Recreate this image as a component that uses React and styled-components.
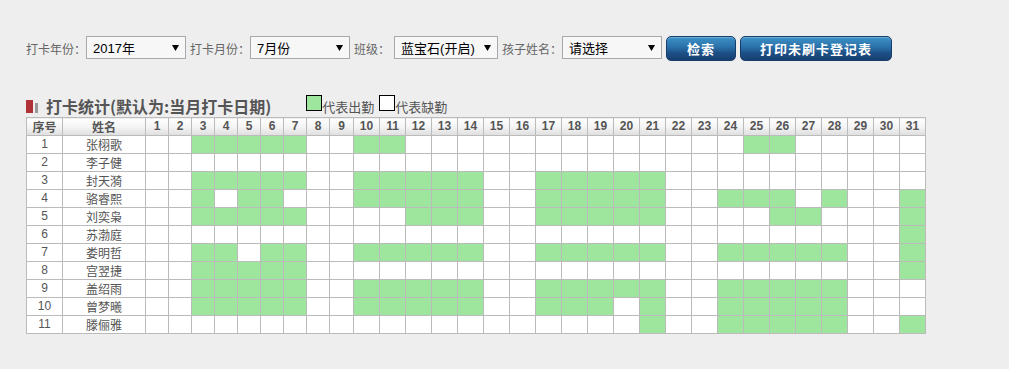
import React from "react";
import styled, { createGlobalStyle } from "styled-components";

const GlobalStyle = createGlobalStyle`
  html, body {
    margin: 0;
    padding: 0;
    background: #eeeeee;
  }
  body {
    font-family: "Liberation Sans", "Noto Sans CJK SC", sans-serif;
    color: #555;
  }
`;

const Page = styled.div`
  padding: 36px 26px 36px 26px;
  width: 957px;
  box-sizing: border-box;
`;

const FilterBar = styled.div`
  display: flex;
  align-items: center;
  gap: 4px;
  height: 25px;
`;

const Field = styled.div`
  display: flex;
  align-items: center;
`;

const Label = styled.span`
  font-family: "Noto Sans CJK SC", sans-serif;
  font-size: 12px;
  color: #666;
  white-space: nowrap;
  margin-right: ${(p) => p.$gap || 0}px;
`;

const SelectBox = styled.div`
  box-sizing: border-box;
  width: ${(p) => p.$width}px;
  height: 23px;
  margin-bottom: 2px;
  border: 1px solid #a9a9a9;
  background: #f7f7f7;
  display: flex;
  align-items: center;
  justify-content: space-between;
  padding: 0 6px 0 6px;
  font-size: 13px;
  color: #000;
`;

const Arrow = () => (
  <svg width="7" height="6" viewBox="0 0 7 6">
    <path d="M0 0 L7 0 L3.5 6 Z" fill="#000" />
  </svg>
);

const Button = styled.button`
  box-sizing: border-box;
  height: 25px;
  width: ${(p) => p.$width}px;
  border: 1px solid #173d6b;
  border-radius: 5px;
  background: linear-gradient(#3d93c8 0%, #2a6fa8 45%, #1c4f86 70%, #173f70 100%);
  box-shadow: inset 0 1px 0 rgba(255, 255, 255, 0.25);
  color: #fff;
  font-family: "Noto Sans CJK SC", sans-serif;
  font-weight: bold;
  font-size: 13px;
  letter-spacing: 1px;
  padding: 0;
  cursor: pointer;
`;

const TitleRow = styled.div`
  display: flex;
  align-items: center;
  margin-top: 34px;
  height: 22px;
`;

const TitleIcon = styled.span`
  display: flex;
  align-items: flex-end;
  gap: 2px;
  margin-right: 8px;
  height: 13px;

  &::before {
    content: "";
    width: 7px;
    height: 13px;
    background: #b03236;
  }
  &::after {
    content: "";
    width: 3px;
    height: 10px;
    background: #999;
  }
`;

const Title = styled.h2`
  margin: 0;
  font-family: "Noto Sans CJK SC", sans-serif;
  font-size: 16px;
  font-weight: bold;
  color: #555;
  line-height: 22px;
`;

const Legend = styled.div`
  display: flex;
  align-items: center;
  margin-left: 35px;
  font-family: "Noto Sans CJK SC", sans-serif;
  font-size: 13px;
  color: #555;
`;

const Swatch = styled.span`
  box-sizing: border-box;
  width: 16px;
  height: 16px;
  border: 1px solid #000;
  background: ${(p) => (p.$on ? "#9ee69e" : "#fff")};
  margin-top: -6px;
`;

const LegendText = styled.span`
  margin-right: 5px;
`;

const Table = styled.table`
  border-collapse: collapse;
  table-layout: fixed;
  width: 900px;
  margin-top: 0;
  background: #fff;
`;

const HeadCell = styled.th`
  height: 17px;
  padding: 0;
  border: 1px solid #bbb;
  background: linear-gradient(#ffffff 0%, #f4f4f4 50%, #dedede 100%);
  font-size: 12px;
  font-weight: bold;
  color: #555;
  text-align: center;
  line-height: 17px;
  font-family: ${(p) => (p.$cjk ? `"Noto Sans CJK SC", sans-serif` : `"Liberation Sans", sans-serif`)};
`;

const Cell = styled.td`
  height: 17px;
  padding: 0;
  border: 1px solid #bbb;
  background: ${(p) => (p.$on ? "#9ee69e" : "#fff")};
  font-size: 12px;
  color: #555;
  text-align: center;
  line-height: 17px;
  font-family: ${(p) => (p.$cjk ? `"Noto Sans CJK SC", sans-serif` : `"Liberation Sans", sans-serif`)};
`;

const days = Array.from({ length: 31 }, (_, i) => i + 1);

const colWidth = (d) => (d <= 8 ? 23 : d === 9 ? 24 : 26);

const range = (a, b) => Array.from({ length: b - a + 1 }, (_, i) => a + i);

const students = [
  { name: "张栩歌", on: [...range(3, 7), 10, 11, 25, 26] },
  { name: "李子健", on: [] },
  { name: "封天漪", on: [...range(3, 7), ...range(10, 14), ...range(17, 21)] },
  { name: "骆睿熙", on: [3, 5, 6, ...range(10, 14), ...range(17, 21), 24, 25, 26, 28, 31] },
  { name: "刘奕枭", on: [...range(3, 7), 12, 13, 14, ...range(17, 21), 26, 27, 31] },
  { name: "苏渤庭", on: [31] },
  { name: "娄明哲", on: [3, 4, 6, 7, ...range(10, 14), ...range(17, 21), ...range(24, 28), 31] },
  { name: "宫翌捷", on: [...range(3, 7), 31] },
  { name: "盖绍雨", on: [...range(3, 7), ...range(10, 14), ...range(17, 21), ...range(24, 28)] },
  { name: "曾梦曦", on: [...range(3, 7), ...range(10, 14), 17, 18, 19, 21, ...range(24, 28)] },
  { name: "滕俪雅", on: [21, ...range(24, 28), 31] },
];

export default function App() {
  return (
    <Page>
      <GlobalStyle />
      <FilterBar>
        <Field>
          <Label>打卡年份：</Label>
          <SelectBox $width={100}>
            <span>2017年</span>
            <Arrow />
          </SelectBox>
        </Field>
        <Field>
          <Label>打卡月份：</Label>
          <SelectBox $width={100}>
            <span>7月份</span>
            <Arrow />
          </SelectBox>
        </Field>
        <Field>
          <Label $gap={4}>班级：</Label>
          <SelectBox $width={104}>
            <span>蓝宝石(开启)</span>
            <Arrow />
          </SelectBox>
        </Field>
        <Field>
          <Label>孩子姓名：</Label>
          <SelectBox $width={100}>
            <span>请选择</span>
            <Arrow />
          </SelectBox>
        </Field>
        <Button $width={70}>检索</Button>
        <Button $width={152}>打印未刷卡登记表</Button>
      </FilterBar>

      <TitleRow>
        <TitleIcon />
        <Title>打卡统计(默认为:当月打卡日期)</Title>
        <Legend>
          <Swatch $on />
          <LegendText>代表出勤</LegendText>
          <Swatch />
          <LegendText>代表缺勤</LegendText>
        </Legend>
      </TitleRow>

      <Table>
        <colgroup>
          <col style={{ width: 36 }} />
          <col style={{ width: 83 }} />
          {days.map((d) => (
            <col key={d} style={{ width: colWidth(d) }} />
          ))}
        </colgroup>
        <thead>
          <tr>
            <HeadCell $cjk>序号</HeadCell>
            <HeadCell $cjk>姓名</HeadCell>
            {days.map((d) => (
              <HeadCell key={d}>{d}</HeadCell>
            ))}
          </tr>
        </thead>
        <tbody>
          {students.map((s, i) => (
            <tr key={s.name}>
              <Cell>{i + 1}</Cell>
              <Cell $cjk>{s.name}</Cell>
              {days.map((d) => (
                <Cell key={d} $on={s.on.includes(d)} />
              ))}
            </tr>
          ))}
        </tbody>
      </Table>
    </Page>
  );
}
